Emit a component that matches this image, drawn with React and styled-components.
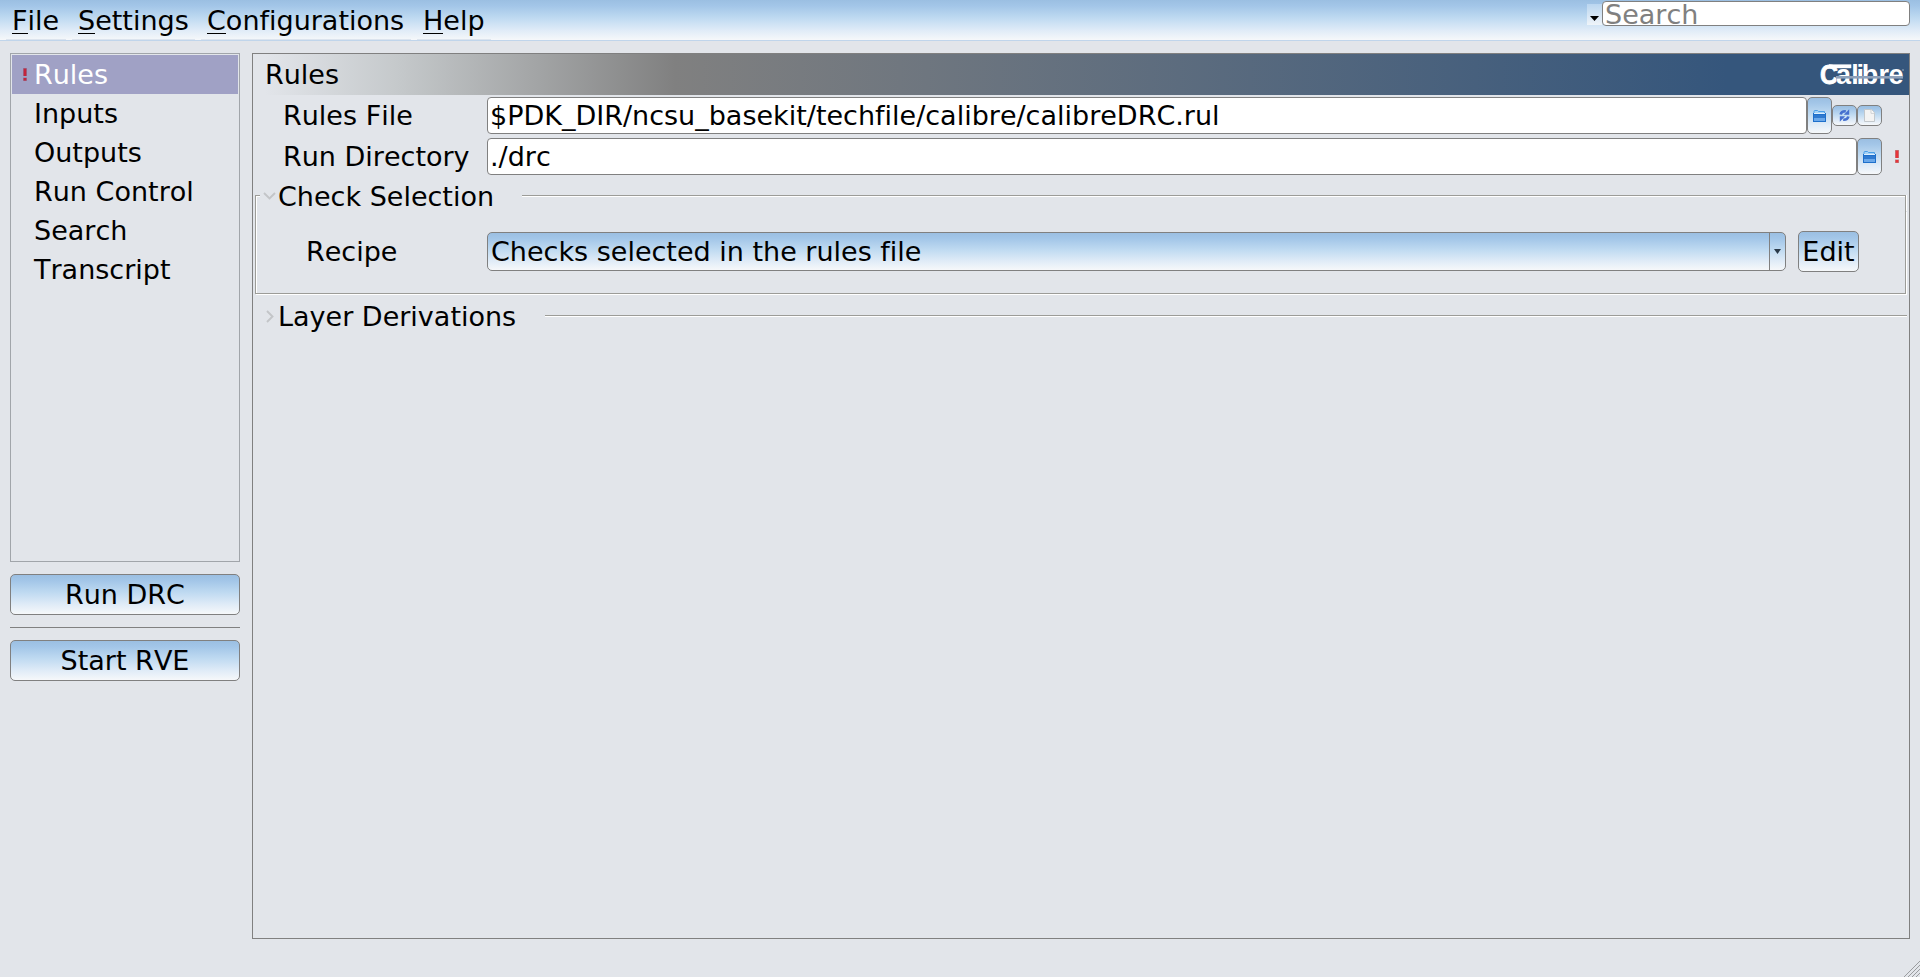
import React from "react";
import styled, { createGlobalStyle } from "styled-components";

const Global = createGlobalStyle`
  * { box-sizing: border-box; }
  body {
    margin: 0;
    background: #e2e5ea;
    color: #000;
    font: 27px/31px "DejaVu Sans", sans-serif;
    font-kerning: none;
    font-variant-ligatures: none;
    overflow: hidden;
  }
  button, input {
    font: inherit;
    font-kerning: none;
    font-variant-ligatures: none;
    color: inherit;
  }
`;

const glossy = "linear-gradient(#9bbfe2 0%, #a3c6e8 15%, #bfdaf1 45%, #dfebf7 75%, #f6f8fa 100%)";

const Window = styled.div`
  width: 1920px;
  height: 977px;
  display: flex;
  flex-direction: column;
  position: relative;
`;

const MenuBar = styled.nav`
  height: 41px;
  flex: none;
  display: flex;
  gap: 6px;
  padding-left: 6px;
  background: ${glossy};
  border-bottom: 1px solid #c0d5eb;
`;

const MenuItem = styled.div`
  width: ${(p) => p.$width}px;
  padding: 5px 6px 0;
  white-space: nowrap;
  border-bottom: 1px solid #dce4ee;
`;

const Mnemonic = styled.span`
  display: inline-block;
  height: 29px;
  border-bottom: 1px solid #000;
`;

const SearchArea = styled.div`
  margin: 1px 10px 0 auto;
  height: 25px;
  display: flex;
`;

const SearchMenu = styled.div`
  width: 15px;
  height: 21px;
  margin-top: 3px;
  display: flex;
  justify-content: center;
  padding-top: 12px;
  background: linear-gradient(#bad6f0, #eff4f9);
`;

const SearchInput = styled.input`
  width: 308px;
  height: 25px;
  padding: 1px 2px 0;
  border: 1px solid #808080;
  border-radius: 4px;
  background: #fff;
  outline: none;
  &::placeholder { color: #808080; opacity: 1; }
`;

const Body = styled.main`
  flex: 1;
  display: flex;
  gap: 12px;
  padding: 12px 10px 38px;
`;

const Sidebar = styled.aside`
  width: 230px;
  display: flex;
  flex-direction: column;
`;

const PageList = styled.div`
  height: 509px;
  border: 1px solid #a1a5aa;
  padding: 1px;
  margin-bottom: 12px;
`;

const PageItem = styled.div`
  height: 39px;
  padding-top: 4px;
  display: flex;
  background: ${(p) => (p.$selected ? "#a0a1c5" : "transparent")};
  color: ${(p) => (p.$selected ? "#fff" : "#000")};
`;

const Marker = styled.span`
  width: 22px;
  padding: 9px 0 0 11px;
  display: flex;
  align-items: flex-start;
`;

const PushButton = styled.button`
  width: ${(p) => p.$width || 230}px;
  height: 41px;
  padding: 0;
  border: 1px solid #808080;
  border-radius: 5px;
  background: ${glossy};
`;

const Rule = styled.div`
  height: 1px;
  margin: 12px 0;
  background: #808080;
`;

const Panel = styled.section`
  flex: 1;
  border: 1px solid #808080;
  display: flex;
  flex-direction: column;
`;

const PanelHeader = styled.header`
  height: 41px;
  display: flex;
  justify-content: space-between;
  padding: 5px 4px 0 12px;
  background: linear-gradient(90deg, #e2e5ea 0.7%, #c4c8ca 9%, #808080 25.5%, #35567c 89%);
`;

const FieldRow = styled.div`
  display: flex;
  height: 37px;
  align-items: center;
  margin-top: ${(p) => p.$top}px;
`;

const Label = styled.label`
  width: ${(p) => p.$width}px;
  padding-left: ${(p) => p.$indent}px;
  flex: none;
`;

const TextInput = styled.input`
  width: ${(p) => p.$width}px;
  height: 37px;
  padding: 0 2px;
  border: 1px solid #808080;
  border-radius: 4px;
  background: #fff;
  outline: none;
`;

const ToolButton = styled.button`
  width: 25px;
  height: ${(p) => (p.$small ? 21 : 37)}px;
  padding: 0;
  display: flex;
  align-items: center;
  justify-content: center;
  border: 1px solid #808080;
  border-radius: 5px;
  background: ${glossy};
`;

const Warning = styled.span`
  margin-left: 13px;
  display: flex;
`;

const Group = styled.div`
  margin: ${(p) => p.$top}px 2px 0 2px;
`;

const GroupTitle = styled.div`
  display: flex;
  height: 31px;
  padding-left: ${(p) => p.$inset}px;
  white-space: nowrap;
`;

const Chevron = styled.span`
  width: 18px;
  padding: 1px 0 0 1px;
  display: flex;
  align-items: center;
  justify-content: center;
`;

const TitleLine = styled.span`
  flex: 1;
  height: 2px;
  margin: 15px 0 0 ${(p) => p.$left}px;
  border-top: 1px solid #9c9c98;
  border-bottom: 1px solid #fff;
`;

const TitleText = styled.span`
  width: ${(p) => p.$width}px;
  padding-top: 1px;
`;

const GroupStart = styled.span`
  width: 5px;
  height: 16px;
  margin-top: 15px;
  border: solid #9c9c98;
  border-width: 1px 0 0 1px;
  box-shadow: inset 1px 1px #fff;
`;

const GroupEnd = styled.span`
  width: 2px;
  height: 16px;
  margin-top: 15px;
  border-left: 1px solid #9c9c98;
  border-right: 1px solid #fff;
`;

const GroupBody = styled.div`
  display: flex;
  height: 83px;
  padding-top: 21px;
  border: solid #9c9c98;
  border-width: 0 1px 1px;
  margin-right: 1px;
  box-shadow: 1px 1px #fff, inset 1px 0 #fff;
`;

const RecipeLabel = styled.label`
  width: 231px;
  padding: 4px 0 0 50px;
`;

const Combo = styled.div`
  width: 1299px;
  height: 39px;
  display: flex;
  border: 1px solid #808080;
  border-radius: 5px;
  background: ${glossy};
  margin: 0 12px 0 0;
`;

const ComboText = styled.span`
  flex: 1;
  padding: 3px 0 0 3px;
`;

const ComboArrow = styled.span`
  width: 16px;
  border-left: 1px solid #808080;
  display: flex;
  align-items: center;
  justify-content: center;
`;

const EditSlot = styled.div`
  margin-top: -1px;
`;

const Logo = styled.svg`
  flex: none;
  overflow: visible;
  font: bold 27px "Liberation Sans", sans-serif;
`;

const Grip = styled.svg`
  position: absolute;
  right: 0;
  bottom: 0;
`;

function Exclamation({ color, edge }) {
  return (
    <svg width="4" height="13" viewBox="0 0 4 13">
      <rect width="4" height="8" fill={edge} />
      <rect x="0.6" y="0.5" width="2.8" height="7.5" fill={color} />
      <rect y="9.5" width="4" height="3.5" fill={edge} />
      <rect x="0.6" y="10" width="2.8" height="2.6" fill={color} />
    </svg>
  );
}

function FolderIcon() {
  return (
    <svg width="13" height="12" viewBox="0 0 13 12">
      <path d="M1 4V1.5Q1 .5 2 .5H4.5L5.5 1.5H11.5V4" fill="#a5d2f6" stroke="#4a9fe8" />
      <rect y="3" width="13" height="9" fill="#1d6fcb" />
      <rect x="1" y="3" width="11" height="1" fill="#dcefff" />
      <rect x="1" y="5" width="11" height="3" fill="#2f7ad0" />
      <rect x="1" y="8" width="11" height="3" fill="#6aa8ea" />
    </svg>
  );
}

function RefreshIcon() {
  return (
    <svg width="11" height="13" viewBox="0 0 11 13">
      <path d="M1.6 5.5Q2.5 2 6.8 2.3" fill="none" stroke="#4670cf" strokeWidth="2.6" />
      <path d="M10.2 .3V5.8H4.8Z" fill="#4670cf" />
      <path d="M9.4 7.5Q8.5 11 4.2 10.7" fill="none" stroke="#4670cf" strokeWidth="2.6" />
      <path d="M.8 12.7V7.2H6.2Z" fill="#4670cf" />
    </svg>
  );
}

function PageIcon() {
  return (
    <svg width="11" height="13" viewBox="0 0 11 13">
      <path d="M.5 .5H7.5L10.5 3.8V12.5H.5Z" fill="#f3f3f3" stroke="#c3c8cc" />
      <path d="M7 .8V4.3H10.3" fill="#fff" stroke="#cdd0d2" />
    </svg>
  );
}

function CalibreLogo() {
  return (
    <Logo width="85" height="32" viewBox="0 -5 85 32">
      <text x="0" y="20" textLength="18" lengthAdjust="spacingAndGlyphs" fill="#fff" stroke="#fff" strokeWidth="0.8">C</text>
      <rect x="9" y="0.4" width="22.3" height="3.8" fill="#fff" />
      <text x="16 31.2 36.6 41.8 58.5 68.5" y="20" fill="#fff" stroke="#35567c" strokeWidth="0.7" paintOrder="stroke">alibre</text>
      <rect x="16" y="12" width="67" height="2.6" fill="#8ea1ba" />
      <circle cx="83" cy="6" r="0.7" fill="#c5d0dc" />
    </Logo>
  );
}

const menus = [["File", 60], ["Settings", 123], ["Configurations", 210], ["Help", 74]];
const pages = ["Rules", "Inputs", "Outputs", "Run Control", "Search", "Transcript"];

export default function App() {
  return (
    <Window>
      <Global />
      <MenuBar>
        {menus.map(([name, width]) => (
          <MenuItem key={name} $width={width}>
            <Mnemonic>{name[0]}</Mnemonic>{name.slice(1)}
          </MenuItem>
        ))}
        <SearchArea>
          <SearchMenu>
            <svg width="9" height="5" viewBox="0 0 9 5"><path d="M0 0H9L4.5 5Z" fill="#000" /></svg>
          </SearchMenu>
          <SearchInput placeholder="Search" />
        </SearchArea>
      </MenuBar>
      <Body>
        <Sidebar>
          <PageList>
            {pages.map((name, i) => (
              <PageItem key={name} $selected={i === 0}>
                <Marker>{i === 0 && <Exclamation color="#c4243c" edge="#8d7fa0" />}</Marker>
                {name}
              </PageItem>
            ))}
          </PageList>
          <PushButton>Run DRC</PushButton>
          <Rule />
          <PushButton>Start RVE</PushButton>
        </Sidebar>
        <Panel>
          <PanelHeader>
            Rules
            <CalibreLogo />
          </PanelHeader>
          <FieldRow $top={2}>
            <Label $width={234} $indent={30}>Rules File</Label>
            <TextInput $width={1320} defaultValue="$PDK_DIR/ncsu_basekit/techfile/calibre/calibreDRC.rul" />
            <ToolButton><FolderIcon /></ToolButton>
            <ToolButton $small><RefreshIcon /></ToolButton>
            <ToolButton $small><PageIcon /></ToolButton>
          </FieldRow>
          <FieldRow $top={4}>
            <Label $width={234} $indent={30}>Run Directory</Label>
            <TextInput $width={1370} defaultValue="./drc" />
            <ToolButton><FolderIcon /></ToolButton>
            <Warning><Exclamation color="#e8343a" edge="#b98a8c" /></Warning>
          </FieldRow>
          <Group $top={5}>
            <GroupTitle $inset={0}>
              <GroupStart />
              <Chevron>
                <svg width="13" height="8" viewBox="0 0 13 8"><path d="M1 1L6.5 6.5L12 1" fill="none" stroke="#c3c5c8" strokeWidth="1.9" /></svg>
              </Chevron>
              <TitleText $width={219}>Check Selection</TitleText>
              <TitleLine $left={25} />
              <GroupEnd />
            </GroupTitle>
            <GroupBody>
              <RecipeLabel>Recipe</RecipeLabel>
              <Combo>
                <ComboText>Checks selected in the rules file</ComboText>
                <ComboArrow>
                  <svg width="7" height="5" viewBox="0 0 7 5"><path d="M0 0H7L3.5 5Z" fill="#2b3a49" /></svg>
                </ComboArrow>
              </Combo>
              <EditSlot><PushButton $width={61}>Edit</PushButton></EditSlot>
            </GroupBody>
          </Group>
          <Group $top={6}>
            <GroupTitle $inset={5}>
              <Chevron>
                <svg width="8" height="13" viewBox="0 0 8 13"><path d="M1 1L6.5 6.5L1 12" fill="none" stroke="#c3c5c8" strokeWidth="1.9" /></svg>
              </Chevron>
              <TitleText $width={242}>Layer Derivations</TitleText>
              <TitleLine $left={25} />
            </GroupTitle>
          </Group>
        </Panel>
      </Body>
      <Grip width="17" height="17" viewBox="0 0 17 17">
        <path d="M1 17L17 1M5 17L17 5M9 17L17 9M13 17L17 13" stroke="#9a9c9f" strokeWidth="1" />
      </Grip>
    </Window>
  );
}
